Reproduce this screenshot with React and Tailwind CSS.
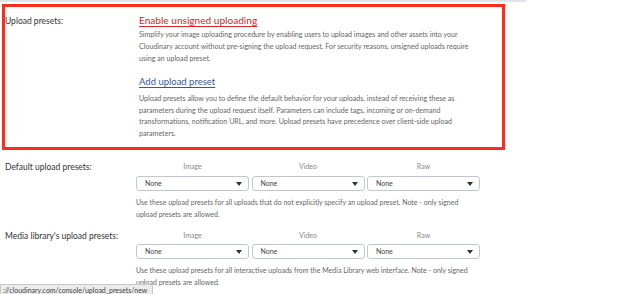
const presetColumns = ['Image', 'Video', 'Raw']

const presetRows = [
  {
    label: 'Default upload presets:',
    note: [
      'Use these upload presets for all uploads that do not explicitly specify an upload preset. Note - only signed',
      'upload presets are allowed.',
    ],
  },
  {
    label: "Media library's upload presets:",
    note: [
      'Use these upload presets for all interactive uploads from the Media Library web interface. Note - only signed',
      'upload presets are allowed.',
    ],
  },
]

function FakeSelect() {
  return (
    <div className="flex h-[15px] w-[113px] items-center justify-between rounded-[3px] border border-[#c3c8d0] bg-white pl-[8px] pr-[6px]">
      <span className="text-[7px] leading-none text-[#444]">None</span>
      <svg width="6" height="4" viewBox="0 0 6 4">
        <path d="M0 0h6L3 4z" fill="#333" />
      </svg>
    </div>
  )
}

function PresetRow({ row, first }) {
  return (
    <div className={`flex ${first ? 'mt-[11px]' : 'mt-[10px]'}`}>
      <div className="w-[136px] pl-[5px] pt-[1px] text-[8.5px] leading-[10px] text-[#333]">{row.label}</div>
      <div>
        <div className="flex gap-[2.5px]">
          {presetColumns.map((col) => (
            <div key={col} className="w-[113px]">
              <div className="text-center text-[7px] leading-[10px] text-[#888]">{col}</div>
              <div className={first ? 'mt-[5px]' : 'mt-[4px]'}>
                <FakeSelect />
              </div>
            </div>
          ))}
        </div>
        <div className="mt-[5px] text-[7px] leading-[12px] text-[#666]">
          {row.note.map((line) => (
            <div key={line} className="whitespace-nowrap">{line}</div>
          ))}
        </div>
      </div>
    </div>
  )
}

export default function App() {
  return (
    <div
      className="relative h-[294px] w-[640px] overflow-hidden bg-white"
      style={{ fontFamily: 'Lato, "Open Sans", sans-serif' }}
    >
      <div className="h-[2px] w-[526px] bg-[#dfe3ea]" />

      <div className="ml-[2px] mt-[2px] w-[503px] border-[3px] border-[#ff2b1c] pb-[8px] pt-[6px]">
        <div className="flex">
          <div className="w-[134px] pt-[3px] text-[8.5px] leading-[10px] text-[#333]">Upload presets:</div>
          <div>
            <div className="text-[10.1px] leading-[14px] text-[#d3262c] underline underline-offset-[2px]">
              Enable unsigned uploading
            </div>
            <div className="mt-[2px] text-[7.1px] leading-[12px] text-[#666]">
              <div className="whitespace-nowrap">
                Simplify your image uploading procedure by enabling users to upload images and other assets into your
              </div>
              <div className="whitespace-nowrap">
                Cloudinary account without pre-signing the upload request. For security reasons, unsigned uploads require
              </div>
              <div className="whitespace-nowrap">using an upload preset.</div>
            </div>
            <div className="mt-[10px] text-[9.5px] leading-[14px] text-[#33599a] underline underline-offset-[2px]">
              Add upload preset
            </div>
            <div className="mt-[4px] text-[7.1px] leading-[11.5px] text-[#666]">
              <div className="whitespace-nowrap">
                Upload presets allow you to define the default behavior for your uploads, instead of receiving these as
              </div>
              <div className="whitespace-nowrap">
                parameters during the upload request itself. Parameters can include tags, incoming or on-demand
              </div>
              <div className="whitespace-nowrap">
                transformations, notification URL, and more. Upload presets have precedence over client-side upload
              </div>
              <div className="whitespace-nowrap">parameters.</div>
            </div>
          </div>
        </div>
      </div>

      {presetRows.map((row, i) => (
        <PresetRow key={row.label} row={row} first={i === 0} />
      ))}

      <div className="absolute bottom-[-3px] left-0 w-[153px] overflow-hidden rounded-tr-[3px] border border-[#c8c8c8] bg-[#ececec] px-[2px] text-[7px] leading-[11px] text-[#444] whitespace-nowrap">
        ://cloudinary.com/console/upload_presets/new
      </div>
    </div>
  )
}
